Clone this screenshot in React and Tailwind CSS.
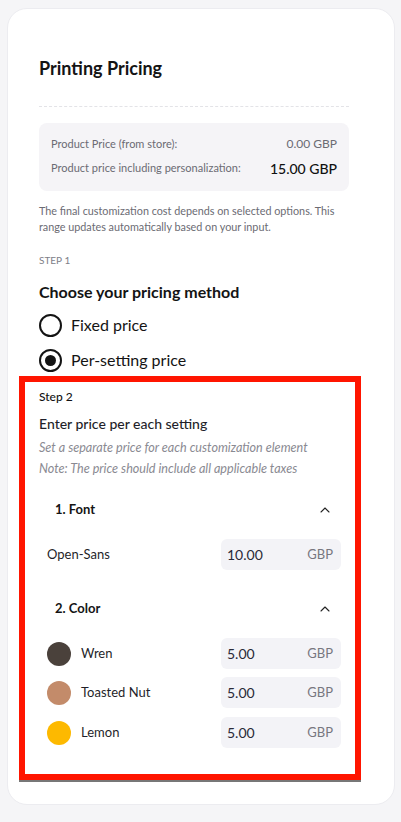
import React from "react";
import { ChevronUp } from "lucide-react";

const font = { fontFamily: "Lato, 'Noto Sans', sans-serif" };

function PriceInput({ value }) {
  return (
    <div className="flex h-[31px] w-[120px] items-center justify-between rounded-[6px] bg-[#f3f3f7] pl-[6px] pr-[8px]">
      <span className="text-[14px] text-[#2a2a38]">{value}</span>
      <span className="text-[13px] text-[#77777f]">GBP</span>
    </div>
  );
}

function ColorRow({ color, name, value, className }) {
  return (
    <div className={"flex items-center justify-between pl-[8px] " + className}>
      <div className="flex items-center gap-[10px]">
        <div className="h-[24px] w-[24px] rounded-full" style={{ backgroundColor: color }} />
        <span className="text-[13px] text-[#1f1f2a]">{name}</span>
      </div>
      <PriceInput value={value} />
    </div>
  );
}

export default function App() {
  return (
    <div className="min-h-[822px] bg-[#f5f5f7] pt-[8px]" style={font}>
      <div className="ml-[7px] w-[388px] rounded-[20px] border border-[#ececf0] bg-white pb-[24px] pl-[11px] pt-[47px]">
        <div className="ml-[20px] w-[310px]">
          <h1 className="h-[24px] text-[18px] font-bold leading-[24px] text-[#141414]">Printing Pricing</h1>
          <div className="mt-[26px] border-t border-dashed border-[#e3e3e7]" />
          <div className="mt-[16px] rounded-[8px] bg-[#f5f4f7] px-[12px] pb-[13px] pt-[13px]">
            <div className="flex h-[16px] items-center justify-between">
              <span className="text-[11px] text-[#6b6b73]">Product Price (from store):</span>
              <span className="text-[12px] text-[#6b6b73]">0.00 GBP</span>
            </div>
            <div className="mt-[6px] flex h-[20px] items-center justify-between">
              <span className="text-[11px] text-[#6b6b73]">Product price including personalization:</span>
              <span className="text-[14px] font-medium text-[#111]">15.00 GBP</span>
            </div>
          </div>
          <p className="mt-[12px] text-[10.8px] leading-[16px] text-[#6b6b73]">
            The final customization cost depends on selected options. This range updates automatically based on your input.
          </p>
          <div className="mt-[18px] h-[14px] text-[10px] uppercase leading-[14px] text-[#808088]">Step 1</div>
          <div className="mt-[14px] h-[22px] text-[16px] font-bold leading-[22px] text-[#141414]">Choose your pricing method</div>
          <div className="mt-[8px] flex h-[28px] items-center gap-[9px]">
            <div className="h-[23px] w-[23px] rounded-full border-2 border-[#141414]" />
            <span className="text-[16px] text-[#141414]">Fixed price</span>
          </div>
          <div className="mt-[7px] flex h-[28px] items-center gap-[9px]">
            <div className="flex h-[23px] w-[23px] items-center justify-center rounded-full border-2 border-[#141414]">
              <div className="h-[11px] w-[11px] rounded-full bg-[#141414]" />
            </div>
            <span className="text-[16px] text-[#141414]">Per-setting price</span>
          </div>
        </div>

        <div className="mt-[2px] w-[342px] border-[6px] border-[#ff1500] px-[14px] pb-[26px] pt-[7px] shadow-[0_2px_0_#777]">
          <div className="h-[16px] text-[12px] font-medium leading-[16px] text-[#111]">Step 2</div>
          <div className="mt-[9px] h-[20px] text-[14px] font-medium leading-[20px] text-[#1f1f2a]">Enter price per each setting</div>
          <div className="mt-[6px] h-[16px] text-[12.6px] italic leading-[16px] text-[#8a8a92]">Set a separate price for each customization element</div>
          <div className="mt-[5px] h-[16px] text-[12.6px] italic leading-[16px] text-[#8a8a92]">Note: The price should include all applicable taxes</div>

          <div className="mt-[23px] flex h-[20px] items-center justify-between pl-[16px] pr-[8px]">
            <span className="text-[13px] font-bold text-[#141414]">1. Font</span>
            <ChevronUp size={16} strokeWidth={1.6} className="text-[#222]" />
          </div>
          <div className="mt-[19px] flex items-center justify-between pl-[8px]">
            <span className="text-[13px] text-[#1f1f2a]">Open-Sans</span>
            <PriceInput value="10.00" />
          </div>

          <div className="mt-[29px] flex h-[20px] items-center justify-between pl-[16px] pr-[8px]">
            <span className="text-[13px] font-bold text-[#141414]">2. Color</span>
            <ChevronUp size={16} strokeWidth={1.6} className="text-[#222]" />
          </div>
          <ColorRow className="mt-[19px]" color="#4a413b" name="Wren" value="5.00" />
          <ColorRow className="mt-[8px]" color="#c38b6a" name="Toasted Nut" value="5.00" />
          <ColorRow className="mt-[9px]" color="#fdb900" name="Lemon" value="5.00" />
        </div>
      </div>
    </div>
  );
}
